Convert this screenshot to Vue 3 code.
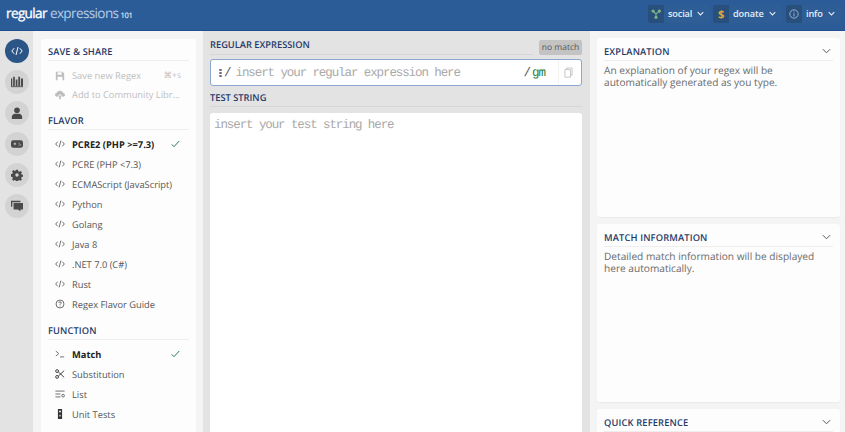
<template>
  <div class="app">
    <header class="top">
      <div class="logo"><b>regular</b><span>expressions</span><small>101</small></div>
      <nav class="menus">
        <button v-for="m in menus" :key="m.label" class="menu">
          <span class="mi" v-html="m.icon"></span>
          <span class="ml">{{ m.label }}</span>
          <svg class="mc" viewBox="0 0 10 6"><path d="M1 1l4 4 4-4" /></svg>
        </button>
      </nav>
    </header>
    <div class="body">
      <aside class="rail">
        <button v-for="(r, i) in rail" :key="i" class="rb" :class="{ on: i === 0 }" v-html="r"></button>
      </aside>
      <section class="side">
        <div class="card">
          <h3 class="h first">SAVE &amp; SHARE</h3>
          <div class="row dim"><span class="ic" v-html="ic.save"></span><span class="t">Save new Regex</span><span class="kbd">⌘+s</span></div>
          <div class="row dim"><span class="ic" v-html="ic.cloud"></span><span class="t">Add to Community Libr...</span></div>
          <h3 class="h fl">FLAVOR</h3>
          <div v-for="f in flavors" :key="f.t" class="row" :class="{ sel: f.sel }">
            <span class="ic" v-html="f.i || ic.code"></span><span class="t">{{ f.t }}</span>
            <svg v-if="f.sel" class="chk" viewBox="0 0 12 10"><path d="M1 5.5l3 3L11 1" /></svg>
          </div>
          <h3 class="h fn">FUNCTION</h3>
          <div v-for="f in funcs" :key="f.t" class="row" :class="{ sel: f.sel }">
            <span class="ic" v-html="f.i"></span><span class="t">{{ f.t }}</span>
            <svg v-if="f.sel" class="chk" viewBox="0 0 12 10"><path d="M1 5.5l3 3L11 1" /></svg>
          </div>
        </div>
      </section>
      <main class="center">
        <div class="rehead">
          <h3 class="ch">REGULAR EXPRESSION</h3>
          <span class="badge">no match</span>
        </div>
        <div class="regex">
          <svg class="dots" viewBox="0 0 3 10"><rect x="0" y="0" width="3" height="2.4" /><rect x="0" y="3.8" width="3" height="2.4" /><rect x="0" y="7.6" width="3" height="2.4" /></svg>
          <span class="slash">/</span>
          <span class="ph">insert your regular expression here</span>
          <span class="slash end">/</span>
          <span class="flags">gm</span>
          <span class="copy">
            <svg viewBox="0 0 10 12"><path d="M3 2.5V1h6v8H7.5M1 2.8h6.3v8.4H1z" /></svg>
          </span>
        </div>
        <h3 class="ch two">TEST STRING</h3>
        <div class="test"><span class="ph">insert your test string here</span></div>
      </main>
      <aside class="right">
        <div v-for="p in panels" :key="p.t" class="panel" :class="p.cls">
          <div class="ph2">
            <h3>{{ p.t }}</h3>
            <svg viewBox="0 0 10 6"><path d="M1 1l4 4 4-4" /></svg>
          </div>
          <p>{{ p.d }}</p>
        </div>
      </aside>
    </div>
  </div>
</template>

<script setup>
const code = '<svg viewBox="0 0 12 10" fill="none" stroke="currentColor" stroke-width="1"><path d="M3.2 2.2L.8 5l2.4 2.8M8.8 2.2L11.200 5 8.800 7.800M7 1L5 9"/></svg>'
const ic = {
  code,
  save: '<svg viewBox="0 0 12 12" fill="currentColor"><path d="M1 1h8l2 2v8H1zM3 1.500v3h5v-3zM3 7v4h6V7z"/></svg>',
  cloud: '<svg viewBox="0 0 12 10" fill="currentColor"><path d="M3 7H2.500C1 7 0 6 0 4.800S1 2.800 2 2.700C2.500 1.200 4 0 6 0s3.400 1.200 3.800 2.700C11 2.800 12 3.700 12 4.900S11 7 9.500 7H9L6 3.800zM6 5l2 2.200H7V10H5V7.200H4z"/></svg>'
}
const menus = [
  { label: 'social', icon: '<svg viewBox="0 0 12 12" fill="none" stroke="#7fb58a" stroke-width="1.300"><path d="M2.500 2.500L6 6l4-3.500M6 6v3.500"/><circle cx="2.500" cy="2.500" r="1.300" fill="#7fb58a"/><circle cx="10" cy="2.500" r="1.300" fill="#7fb58a"/><circle cx="6" cy="10" r="1.300" fill="#7fb58a"/></svg>' },
  { label: 'donate', icon: '<span class="dollar">$</span>' },
  { label: 'info', icon: '<svg viewBox="0 0 12 12" fill="none" stroke="#a8c6e4" stroke-width="1"><circle cx="6" cy="6" r="5"/><path d="M6 5.200V9M6 3v1.200"/></svg>' }
]
const rail = [
  code,
  '<svg viewBox="0 0 14 12" fill="currentColor"><path d="M0 2h1.500v9H0zM2.500 0h2v11h-2zM5.500 3h2v8h-2zM8.500 0h2v11h-2zM11.500 2H14v9h-2.500z"/><path d="M0 11h14v1H0z"/></svg>',
  '<svg viewBox="0 0 12 14" fill="currentColor"><circle cx="6" cy="3.800" r="3.300"/><path d="M0 14v-2.500C0 9.500 2 8.200 3.500 8h5C10 8.200 12 9.500 12 11.500V14z"/></svg>',
  '<svg viewBox="0 0 16 10" fill="currentColor"><rect width="16" height="10" rx="3"/><path fill="#e0e0e0" d="M3.500 4.300h1.200V3h1v1.300h1.200v1H5.700v1.300h-1V5.300H3.500zM10 3.200h1.500v1H10zM12 5.500h1.500v1H12zM10 6h1.500v1H10z"/></svg>',
  '<svg viewBox="0 0 14 14" fill="currentColor" fill-rule="evenodd"><path d="M5.700 0h2.600l.4 2 1.300.6 1.800-1.100 1.800 1.800-1.100 1.800.6 1.300 2 .4v2.600l-2 .4-.6 1.300 1.100 1.800-1.800 1.800-1.800-1.100-1.300.6-.4 2H5.700l-.4-2-1.300-.6-1.800 1.100-1.800-1.800 1.100-1.800-.6-1.300-2-.4V5.700l2-.4.6-1.300-1.100-1.800L2.200.4 4 1.500l1.300-.6zM7 4.700a2.300 2.300 0 100 4.600 2.300 2.300 0 000-4.600z" transform="scale(.875) translate(1 1)"/></svg>',
  '<svg viewBox="0 0 14 12" fill="currentColor"><path d="M0 0h11v1.500H1.500V7H0z"/><path d="M3 2.500h11V10h-3v2l-3-2H3z"/></svg>'
]
const flavors = [
  { t: 'PCRE2 (PHP >=7.3)', sel: true },
  { t: 'PCRE (PHP <7.3)' },
  { t: 'ECMAScript (JavaScript)' },
  { t: 'Python' },
  { t: 'Golang' },
  { t: 'Java 8' },
  { t: '.NET 7.0 (C#)' },
  { t: 'Rust' },
  { t: 'Regex Flavor Guide', i: '<svg viewBox="0 0 12 12" fill="none" stroke="currentColor" stroke-width="1"><circle cx="6" cy="6" r="4.800"/><path d="M4.500 4.800C4.500 3.800 5.200 3.300 6 3.300s1.500.5 1.500 1.400C7.500 5.800 6 5.800 6 7M6 8v1"/></svg>' }
]
const funcs = [
  { t: 'Match', sel: true, i: '<svg viewBox="0 0 12 10" fill="none" stroke="currentColor" stroke-width="1"><path d="M1 1.500L4.500 4.500 1 7.500M6 8.500h5"/></svg>' },
  { t: 'Substitution', i: '<svg viewBox="0 0 12 12" fill="none" stroke="#333" stroke-width="1.100"><circle cx="2.500" cy="2.500" r="1.700"/><circle cx="2.500" cy="9.500" r="1.700"/><path d="M4 3.500L11 10M4 8.500L11 2"/></svg>' },
  { t: 'List', i: '<svg viewBox="0 0 12 10" fill="none" stroke="currentColor" stroke-width="1"><path d="M.5 1.500h11M.5 5h6M.5 8.500h6"/><circle cx="9.700" cy="7" r="1.600"/></svg>' },
  { t: 'Unit Tests', i: '<svg viewBox="0 0 6 12" fill="#333"><path d="M.5 0h5v12h-5z"/><rect x="2" y="2" width="2" height="2" fill="#fff"/><rect x="2" y="7" width="2" height="2" fill="#bbb"/></svg>' }
]
const panels = [
  { t: 'EXPLANATION', d: 'An explanation of your regex will be automatically generated as you type.', cls: 'p1' },
  { t: 'MATCH INFORMATION', d: 'Detailed match information will be displayed here automatically.', cls: 'p2' },
  { t: 'QUICK REFERENCE', d: '', cls: 'p3' }
]
</script>

<style>
html, body { margin: 0; overflow: hidden; }
</style>

<style scoped>
.app { width: 845px; height: 432px; overflow: hidden; font-family: "Open Sans", sans-serif; display: flex; flex-direction: column; background: #e3e3e3; text-rendering: geometricPrecision; }
.top { height: 31px; flex: none; box-sizing: border-box; background: #2b5c98; border-bottom: 1px solid #1f4f8e; display: flex; align-items: center; justify-content: space-between; padding: 0 4px 0 6px; }
.logo { font-size: 13.600px; letter-spacing: -.65px; color: #b6cde6; display: flex; align-items: baseline; margin-top: -5px; }
.logo b { color: #fff; font-weight: 400; margin-right: 3px; -webkit-text-stroke: .3px #fff; }
.logo small { font-size: 7.500px; letter-spacing: -.2px; margin-left: 2px; color: #dbe6f2; -webkit-text-stroke: .2px #dbe6f2; }
.menus { display: flex; gap: 3px; margin-top: -3px; }
.menu { width: 62px; height: 18px; padding: 0 6px 0 0; border: 0; border-radius: 2px; background: #2f5e97; color: #e6eef7; font: 600 9.200px "Open Sans", sans-serif; letter-spacing: -.15px; display: flex; align-items: center; }
.menu:nth-child(2) { width: 69px; }
.menu:nth-child(3) { width: 55px; margin-left: 1px; }
.mi { width: 16px; height: 18px; background: #294f7c; border-radius: 2px 0 0 2px; display: flex; align-items: center; justify-content: center; margin-right: 4px; flex: none; }
.mi :deep(svg) { width: 10px; height: 10px; }
.mi :deep(.dollar) { color: #e8a33c; font-weight: 700; font-size: 11px; }
.mc { width: 7px; height: 5px; margin-left: auto; fill: none; stroke: #e6eef7; stroke-width: 1.500; }
.body { flex: 1; display: flex; min-height: 0; }
.rail { width: 33px; flex: none; background: #e3e3e3; display: flex; flex-direction: column; align-items: center; gap: 7px; padding-top: 8px; box-sizing: border-box; }
.rb { width: 24px; height: 24px; padding: 0; border: 0; border-radius: 50%; background: #d3d3d3; color: #4a4a4a; display: flex; align-items: center; justify-content: center; }
.rb :deep(svg) { width: 12px; height: 12px; }
.rb.on { background: #2c5587; color: #fff; }
.side { width: 170px; flex: none; background: #f4f4f4; padding: 8px 7px 0 8px; box-sizing: border-box; }
.card { background: #fdfdfd; border-radius: 3px; padding: 5px 7px 0; height: 420px; box-sizing: border-box; }
.h { margin: 5px 0 4px; font: 600 9.300px/15px "Open Sans", sans-serif; color: #1f3a68; border-bottom: 1px solid #eee; padding-bottom: 1px; letter-spacing: .1px; }
.h.first { margin-top: 0; margin-bottom: 5px; }
.h.fl { margin-top: 9px; }
.h.fn { margin-top: 9px; }
.row { height: 20px; display: flex; align-items: center; font-size: 9.300px; color: #555; }
.row .ic { width: 12px; height: 12px; margin-left: 6px; margin-right: 6px; display: flex; align-items: center; justify-content: center; flex: none; }
.row .ic :deep(svg) { width: 10px; height: 10px; }
.row.dim { color: #bdbdbd; height: 19px; }
.kbd { margin-left: auto; margin-right: 8px; font-size: 8.500px; }
.sel .t { font-weight: 700; color: #222; }
.chk { width: 9px; height: 8px; margin-left: auto; margin-right: 9px; fill: none; stroke: #1f7a45; stroke-width: 1.300; }
.center { width: 387px; flex: none; background: #e3e3e3; padding: 0 8px 0 7px; box-sizing: border-box; }
.rehead { height: 24px; display: flex; align-items: flex-end; justify-content: space-between; padding-top: 3px; box-sizing: border-box; }
.ch { margin: 0 6px 0 0; font: 600 9.300px/15px "Open Sans", sans-serif; color: #1f3a68; border-bottom: 1px solid #d6d6d6; flex: 1; padding-bottom: 2px; }
.badge { width: 43px; height: 15px; background: #c3c3c3; color: #555; font-size: 8.500px; line-height: 15px; text-align: center; border-radius: 2px; }
.regex { height: 27px; margin-top: 4px; box-sizing: border-box; background: #fff; border: 1px solid #8ba6cf; border-radius: 3px; display: flex; align-items: center; padding-left: 8px; font-family: "Liberation Mono", monospace; font-size: 12.500px; letter-spacing: -1.09px; }
.dots { width: 3px; height: 8px; fill: #666; margin-right: 2px; }
.slash { color: #555; margin-right: 4px; letter-spacing: 0; }
.slash.end { margin-left: auto; margin-right: 1px; }
.ph { color: #a9a9a9; white-space: nowrap; }
.flags { color: #2e7d32; margin-right: 12px; letter-spacing: -1px; width: 14px; }
.copy { width: 19px; height: 100%; display: flex; align-items: center; justify-content: center; margin-right: 3px; border-left: 1px solid #f3f3f3; }
.copy svg { width: 9px; height: 11px; fill: none; stroke: #bbb; stroke-width: .9; }
.ch.two { margin: 4px 0 6px; padding-bottom: 1px; flex: none; }
.test { height: 400px; background: #fff; border-radius: 3px; padding: 4px; font-family: "Liberation Mono", monospace; font-size: 12.500px; line-height: 16px; letter-spacing: -1.09px; box-sizing: border-box; }
.right { flex: 1; background: #f4f4f4; padding: 7px 5px 0 7px; box-sizing: border-box; display: flex; flex-direction: column; gap: 7px; }
.panel { background: #fdfdfd; border-radius: 3px; padding: 5px 7px; box-sizing: border-box; flex: none; box-shadow: 0 1px 1px rgba(0,0,0,.04); }
.p1 { height: 179px; }
.p2 { height: 178px; }
.p3 { height: 60px; }
.ph2 { display: flex; justify-content: space-between; align-items: center; height: 16px; border-bottom: 1px solid #eee; padding-bottom: 1px; }
.ph2 h3 { margin: 0; font: 600 9.300px/15px "Open Sans", sans-serif; color: #1f3a68; letter-spacing: .15px; }
.ph2 svg { width: 9px; height: 6px; margin-right: 2px; fill: none; stroke: #555; stroke-width: 1.100; }
.panel p { margin: 4px 0 0; font-size: 10.150px; line-height: 11.500px; color: #6a6a6a; }
</style>
